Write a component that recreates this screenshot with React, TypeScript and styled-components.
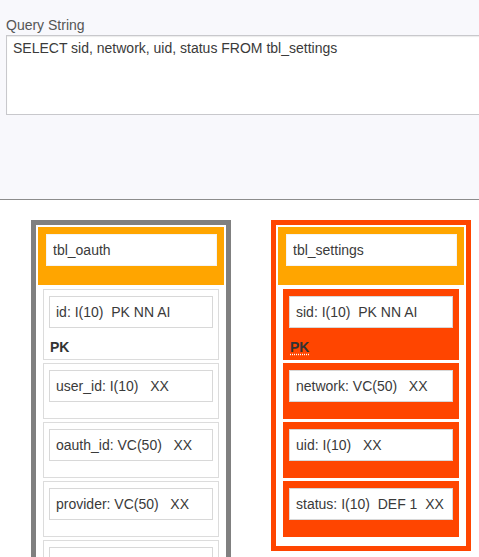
import React from "react";
import styled, { createGlobalStyle } from "styled-components";

const GlobalStyle = createGlobalStyle`
  html, body {
    margin: 0;
    padding: 0;
    background: #ffffff;
    overflow: hidden;
  }
  body {
    font-family: "Liberation Sans", Arial, sans-serif;
    font-size: 14px;
    color: #333;
  }
  * { box-sizing: border-box; }
`;

const Page = styled.div`
  width: 479px;
  overflow: hidden;
`;

const QuerySection = styled.section`
  height: 200px;
  padding: 15px 0 0 6px;
  background: #f8f8fc;
  border-bottom: 1px solid #8c8c8c;
  overflow: hidden;
`;

const QueryLabel = styled.label`
  display: block;
  font-size: 14px;
  line-height: 20px;
  color: #555;
`;

const QueryText = styled.textarea`
  display: block;
  width: 540px;
  height: 80px;
  margin: 0;
  padding: 4px 6px;
  font-family: "Liberation Sans", Arial, sans-serif;
  font-size: 14px;
  line-height: 16px;
  color: #3a3a3a;
  background: #fff;
  border: 1px solid #c8c8cc;
  border-radius: 0;
  box-shadow: inset 0 1px 1px rgba(0, 0, 0, 0.08);
  resize: none;
  outline: none;
`;

const Canvas = styled.section`
  display: flex;
  align-items: flex-start;
  gap: 40px;
  padding: 20px 0 0 31px;
  background: #fff;
`;

const TableBox = styled.div<{ $edge: string }>`
  width: 200px;
  flex: none;
  border: 5px solid ${(p) => p.$edge};
  padding: 2px;
  background: #fff;
`;

const TableHeader = styled.div`
  background: #ffa500;
  padding: 7px 7px 19px 8px;
`;

const NameInput = styled.input`
  display: block;
  width: 100%;
  height: 32px;
  margin: 0;
  padding: 0 6px;
  font-family: "Liberation Sans", Arial, sans-serif;
  font-size: 14px;
  color: #3a3a3a;
  background: #fff;
  border: 1px solid #f4f4f4;
  border-radius: 0;
  outline: none;
`;

const FieldList = styled.div`
  display: flex;
  flex-direction: column;
  gap: 3px;
  padding: 4px 5px 7px 5px;
`;

const FieldRow = styled.div<{ $hot: boolean; $pk: boolean }>`
  border: 1px solid ${(p) => (p.$hot ? "#ff4500" : "#dcdcdc")};
  background: ${(p) => (p.$hot ? "#ff4500" : "#fff")};
  padding: 6px 5px ${(p) => (p.$pk ? "1px" : "16px")} 5px;
`;

const FieldInput = styled.input`
  display: block;
  width: 100%;
  height: 32px;
  margin: 0;
  padding: 0 6px;
  font-family: "Liberation Sans", Arial, sans-serif;
  font-size: 14px;
  color: #3a3a3a;
  white-space: pre;
  background: #fff;
  border: 1px solid #d8d8d8;
  border-radius: 0;
  outline: none;
`;

const PkLabel = styled.div`
  margin: 9px 0 1px 1px;
  font-size: 14px;
  line-height: 20px;
  font-weight: bold;
  color: #333;
`;

const PkAbbr = styled.abbr`
  text-decoration: underline dotted #fff;
  text-underline-offset: 2px;
  cursor: help;
`;

type Field = { text: string; pk?: boolean };
type Table = { name: string; edge: string; hot: boolean; fields: Field[] };

const tables: Table[] = [
  {
    name: "tbl_oauth",
    edge: "#808080",
    hot: false,
    fields: [
      { text: "id: I(10)  PK NN AI", pk: true },
      { text: "user_id: I(10)   XX" },
      { text: "oauth_id: VC(50)   XX" },
      { text: "provider: VC(50)   XX" },
      { text: "token: VC(255)   XX" },
      { text: "created: DT   XX" },
    ],
  },
  {
    name: "tbl_settings",
    edge: "#ff4500",
    hot: true,
    fields: [
      { text: "sid: I(10)  PK NN AI", pk: true },
      { text: "network: VC(50)   XX" },
      { text: "uid: I(10)   XX" },
      { text: "status: I(10)  DEF 1  XX" },
    ],
  },
];

export default function App() {
  return (
    <Page>
      <GlobalStyle />
      <QuerySection>
        <QueryLabel htmlFor="qs">Query String</QueryLabel>
        <QueryText
          id="qs"
          readOnly
          defaultValue="SELECT sid, network, uid, status FROM tbl_settings"
        />
      </QuerySection>
      <Canvas>
        {tables.map((t) => (
          <TableBox key={t.name} $edge={t.edge}>
            <TableHeader>
              <NameInput readOnly defaultValue={t.name} />
            </TableHeader>
            <FieldList>
              {t.fields.map((f) => (
                <FieldRow key={f.text} $hot={t.hot} $pk={!!f.pk}>
                  <FieldInput readOnly defaultValue={f.text} />
                  {f.pk && (
                    <PkLabel>
                      {t.hot ? <PkAbbr title="Primary key">PK</PkAbbr> : "PK"}
                    </PkLabel>
                  )}
                </FieldRow>
              ))}
            </FieldList>
          </TableBox>
        ))}
      </Canvas>
    </Page>
  );
}
